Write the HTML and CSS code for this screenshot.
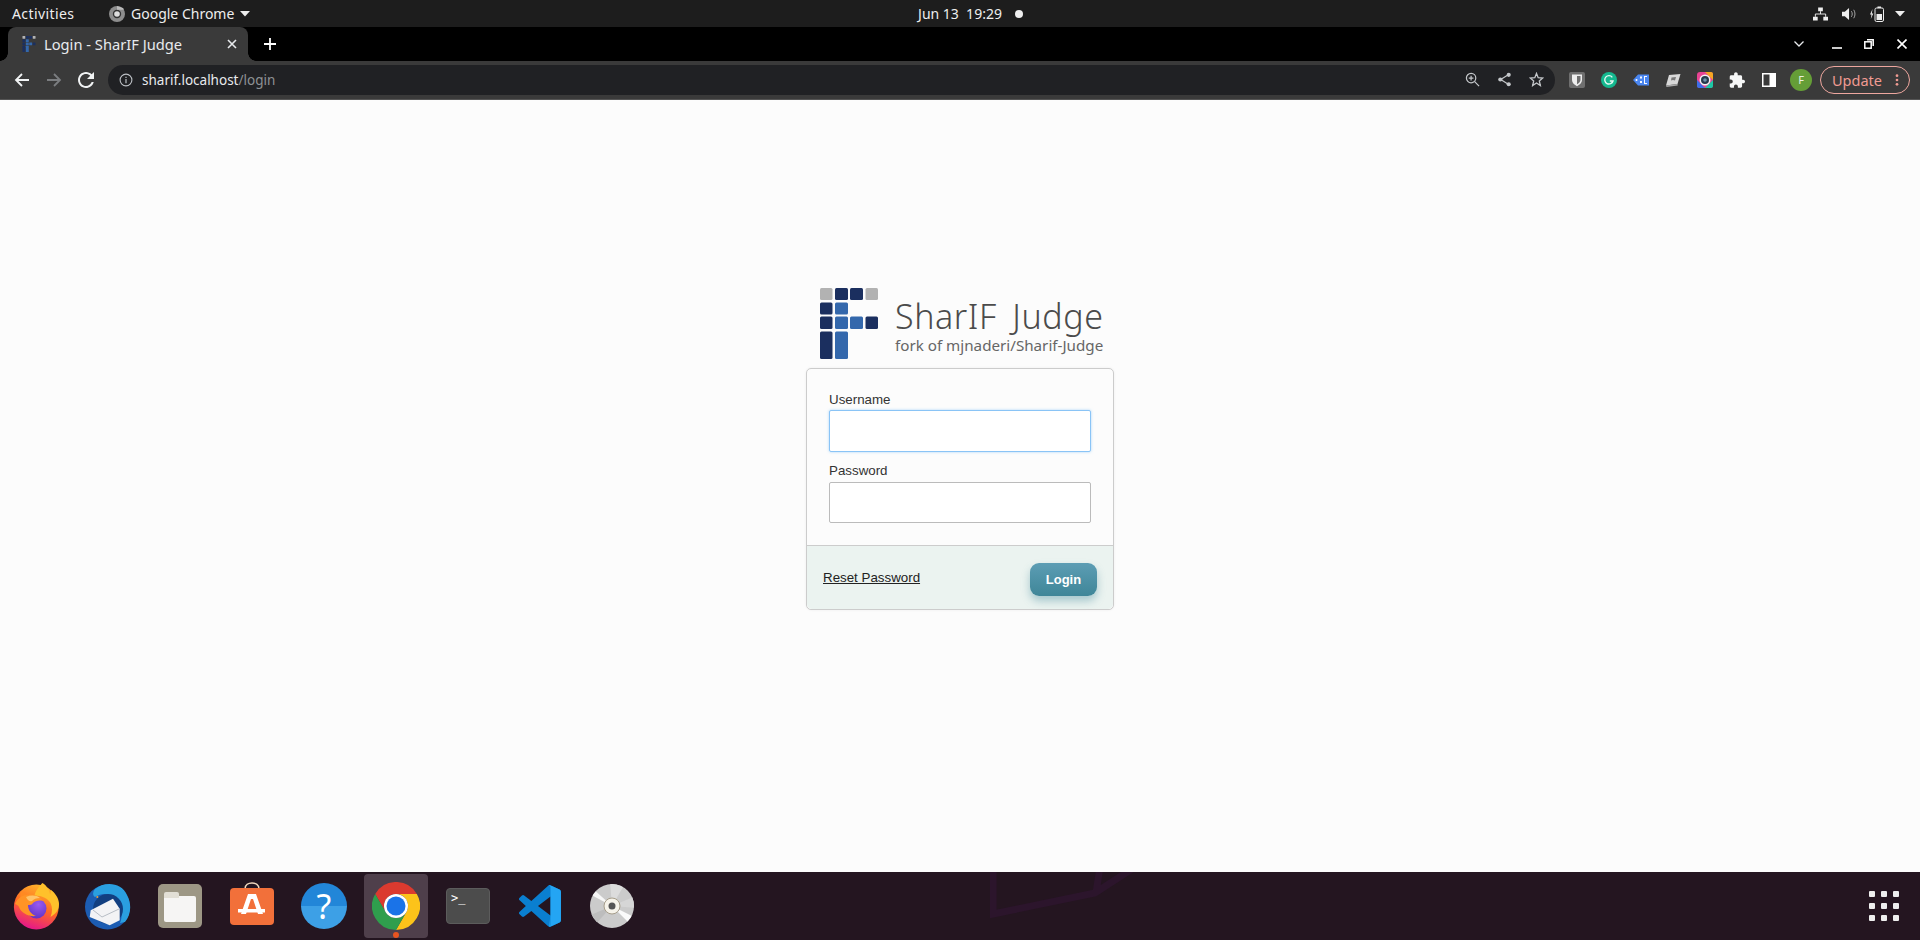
FILE: index.html
```html
<!DOCTYPE html>
<html lang="en">
<head>
<meta charset="utf-8">
<title>Login - SharIF Judge</title>
<link rel="stylesheet" href="styles.css">
</head>
<body>
<header class="topbar">
  <div class="top-left">
    <span class="activities">Activities</span>
    <span class="app-menu">
      <svg class="app-icon" viewBox="0 0 16 16"><circle cx="8" cy="8" r="8" fill="#8d8d8d"/><circle cx="8" cy="8" r="4.2" fill="#333"/><circle cx="8" cy="8" r="2.8" fill="#ddd"/><path d="M8 3.8h7L14 2 8 0z" fill="#bbb"/></svg>
      <span>Google Chrome</span>
      <svg class="caret" viewBox="0 0 10 6"><path d="M0 0h10L5 5.500z" fill="#eee"/></svg>
    </span>
  </div>
  <div class="clock"><span>Jun 13&nbsp;&nbsp;19:29</span><i class="clock-dot"></i></div>
  <div class="top-right">
    <svg class="tray-net" viewBox="0 0 16 14"><path d="M5.500 0h5v4h-5zM0 10h5v4H0zM11 10h5v4h-5z" fill="#eee"/><path d="M8 4v3M2.500 10V7h11v3" stroke="#eee" fill="none"/></svg>
    <svg class="tray-vol" viewBox="0 0 16 14"><path d="M0 4.500h3L7.500 0.500v13L3 9.500H0z" fill="#eee"/><path d="M10 4c1.200 1.800 1.200 4.200 0 6M12.500 2.500c1.800 2.700 1.800 6.300 0 9" stroke="#aaa" fill="none"/></svg>
    <svg class="tray-bat" viewBox="0 0 14 16"><path d="M2.500 3 0 8.500h1.500L.8 13 3.300 7.500H1.800z" fill="#eee"/><rect x="5" y="2" width="8.500" height="13.500" rx="1.500" fill="none" stroke="#eee"/><rect x="7.500" y="0.500" width="3.500" height="1.500" fill="#eee"/><rect x="6.500" y="8" width="5.500" height="6" fill="#eee"/></svg>
    <svg class="caret" viewBox="0 0 10 6"><path d="M0 0h10L5 5.500z" fill="#eee"/></svg>
  </div>
</header>

<div class="tabstrip">
  <div class="tab">
    <svg class="favicon" viewBox="0 0 58 71"><use href="#mark-art"/></svg>
    <span class="tab-title">Login - SharIF Judge</span>
    <svg class="tab-close" viewBox="0 0 10 10"><path d="M1 1l8 8M9 1l-8 8" stroke="#e8eaed" stroke-width="1.600"/></svg>
  </div>
  <svg class="new-tab" viewBox="0 0 12 12"><path d="M6 0v12M0 6h12" stroke="#fff" stroke-width="1.800"/></svg>
  <div class="win-controls">
    <svg class="win-list" viewBox="0 0 10 6"><path d="M.5.500 5 5 9.500.500" fill="none" stroke="#e8eaed" stroke-width="1.300"/></svg>
    <svg class="win-min" viewBox="0 0 10 10"><path d="M0 9h10" stroke="#fff" stroke-width="1.600"/></svg>
    <svg class="win-max" viewBox="0 0 10 10"><path d="M3 .800h6.200V7" fill="none" stroke="#fff" stroke-width="1.500"/><rect x=".8" y="2.800" width="6.400" height="6.400" fill="none" stroke="#fff" stroke-width="1.500"/></svg>
    <svg class="win-close" viewBox="0 0 10 10"><path d="M.5.500l9 9M9.500.500l-9 9" stroke="#fff" stroke-width="1.600"/></svg>
  </div>
</div>

<div class="toolbar">
  <svg class="nav" viewBox="0 0 16 16"><path d="M15 8H2M8 2 2 8l6 6" fill="none" stroke="#f1f3f4" stroke-width="1.800"/></svg>
  <svg class="nav" viewBox="0 0 16 16"><path d="M1 8h13M8 2l6 6-6 6" fill="none" stroke="#7b7d80" stroke-width="1.800"/></svg>
  <svg class="nav" viewBox="4 4 16 16"><path d="M17.650 6.350C16.200 4.900 14.210 4 12 4c-4.420 0-7.990 3.580-7.990 8s3.570 8 7.990 8c3.730 0 6.840-2.550 7.730-6h-2.080c-.82 2.330-3.040 4-5.650 4-3.310 0-6-2.690-6-6s2.690-6 6-6c1.660 0 3.140.69 4.220 1.780L13 11h7V4l-2.350 2.350z" fill="#f1f3f4"/></svg>
  <div class="omnibox">
    <svg class="info" viewBox="0 0 14 14"><circle cx="7" cy="7" r="5.900" fill="none" stroke="#bdc1c6" stroke-width="1.100"/><path d="M7 6v4.200M7 3.800v1.200" stroke="#bdc1c6" stroke-width="1.200"/></svg>
    <span class="url"><b>sharif.localhost</b><span>/login</span></span>
    <span class="omni-actions">
      <svg class="omni-icon" viewBox="0 0 16 16"><circle cx="6.500" cy="6.500" r="5" fill="none" stroke="#c4c7ca" stroke-width="1.300"/><path d="M10.300 10.300 15 15M4 6.500h5M6.500 4v5" stroke="#c4c7ca" stroke-width="1.300"/></svg>
      <svg class="omni-icon" viewBox="0 0 16 16"><path d="M12 3 4 8l8 5" fill="none" stroke="#c4c7ca" stroke-width="1.300"/><circle cx="12.500" cy="3" r="2.200" fill="#c4c7ca"/><circle cx="3.500" cy="8" r="2.200" fill="#c4c7ca"/><circle cx="12.500" cy="13" r="2.200" fill="#c4c7ca"/></svg>
      <svg class="omni-icon" viewBox="0 0 16 16"><path d="M8 1.500 9.800 6l4.900.4-3.700 3.200 1.100 4.800L8 11.800l-4.100 2.600L5 9.600 1.300 6.400 6.200 6z" fill="none" stroke="#c4c7ca" stroke-width="1.400"/></svg>
    </span>
  </div>
  <div class="extensions">
    <svg class="ext" viewBox="0 0 16 16"><rect width="16" height="16" rx="2" fill="#6f6f6f"/><path d="M3 2.500h10v5.500c0 3-2.500 4.800-5 6.200C5.500 12.800 3 11 3 8z" fill="#eee"/><path d="M8 4h3.500v4c0 2-1.800 3.300-3.500 4.300z" fill="#6f6f6f"/></svg>
    <svg class="ext" viewBox="0 0 16 16"><circle cx="8" cy="8" r="8" fill="#15b88f"/><path d="M11.300 5.300A4.200 4.200 0 1 0 12 9H8.800" fill="none" stroke="#e6f7f2" stroke-width="1.400"/></svg>
    <svg class="ext" viewBox="0 0 16 16"><path d="M5 2.500h11v11H5L0 8z" fill="#4a86f0"/><circle cx="3.500" cy="8" r="1" fill="#fff"/><path d="M7 4.500h2v2H7zM7 9h2v2H7zM11 4h1v8h-1zM12 4h2v1h-2zM12 11h2v1h-2z" fill="#fff" fill-opacity=".95"/></svg>
    <svg class="ext" viewBox="0 0 16 16"><path d="M4 3 15.500 2 12.500 12 1 13.500z" fill="#d8d8d8"/><path d="M1 13.500 12.500 12l.2 1.500L1.500 15z" fill="#aaa"/><path d="M6.500 5.500 11 5l-1 3.500-2-.5-2 .5z" fill="#777"/></svg>
    <svg class="ext" viewBox="0 0 16 16"><rect width="16" height="16" rx="3" fill="#e84393"/><path d="M8 0h6a2 2 0 0 1 2 2v6z" fill="#f5a623"/><path d="M16 8v6a2 2 0 0 1-2 2H8z" fill="#1cc8a5"/><path d="M0 8v6a2 2 0 0 0 2 2h6z" fill="#3d6ee8"/><circle cx="8" cy="8" r="5.500" fill="#f3f3f3"/><circle cx="8" cy="8" r="4" fill="#26394c"/><circle cx="8" cy="8" r="1.800" fill="#6f93ab"/></svg>
    <svg class="ext ext-puzzle" viewBox="1 1 22 21"><path d="M20.500 11H19V7c0-1.100-.9-2-2-2h-4V3.500C13 2.120 11.880 1 10.500 1S8 2.120 8 3.500V5H4c-1.100 0-1.990.9-1.990 2v3.800H3.500c1.490 0 2.700 1.210 2.700 2.700s-1.210 2.700-2.700 2.700H2V20c0 1.100.9 2 2 2h3.800v-1.500c0-1.490 1.210-2.700 2.700-2.700 1.490 0 2.700 1.210 2.700 2.700V22H17c1.100 0 2-.9 2-2v-4h1.500c1.380 0 2.500-1.120 2.500-2.500S21.880 11 20.500 11z" fill="#f6f7f7"/></svg>
    <svg class="ext ext-side" viewBox="0 0 14 14"><path fill-rule="evenodd" d="M0 0h14v14H0zM1.500 1.500v11h6v-11z" fill="#fff"/></svg>
    <span class="avatar">F</span>
    <span class="update"><span>Update</span><svg class="update-dots" viewBox="0 0 4 14"><circle cx="2" cy="2" r="1.600"/><circle cx="2" cy="7" r="1.600"/><circle cx="2" cy="12" r="1.600"/></svg></span>
  </div>
</div>

<main class="page">
  <div class="brand">
    <svg class="brand-mark" viewBox="0 0 58 71">
      <g id="mark-art">
        <g fill="#b2b2b2"><rect x="0" y="0" width="12.500" height="12" rx="1.500"/><rect x="45.500" y="0" width="12.500" height="12" rx="1.500"/></g>
        <g fill="#1b2f5f"><rect x="15" y="0" width="13" height="12" rx="1.500"/><rect x="30" y="0" width="13" height="12" rx="1.500"/><rect x="0" y="14.500" width="12.500" height="12" rx="1.500"/><rect x="0" y="28.500" width="12.500" height="12.500" rx="1.500"/><rect x="45.500" y="28.500" width="12.500" height="12.500" rx="1.500"/><rect x="0" y="43.500" width="12.500" height="27.500" rx="1.500"/></g>
        <g fill="#3468ac"><rect x="15" y="14.500" width="13" height="12" rx="1.500"/><rect x="15" y="28.500" width="13" height="12.500" rx="1.500"/><rect x="30" y="28.500" width="13" height="12.500" rx="1.500"/><rect x="15" y="43.500" width="13" height="27.500" rx="1.500"/></g>
      </g>
    </svg>
    <div class="brand-text">
      <span class="brand-title">SharIF Judge</span>
      <span class="brand-sub">fork of mjnaderi/Sharif-Judge</span>
    </div>
  </div>
  <form class="card">
    <div class="card-body">
      <label class="field-label" for="username">Username</label>
      <div class="input input-focus" id="username"></div>
      <label class="field-label field-second" for="password">Password</label>
      <div class="input input-second" id="password"></div>
    </div>
    <div class="card-foot">
      <a class="reset" href="#">Reset Password</a>
      <button class="login" type="button">Login</button>
    </div>
  </form>
</main>

<footer class="dock">
  <svg class="dock-art" viewBox="0 0 200 68"><path d="M3-5V42L105 21 145-5M110-5l-4 26" fill="none" stroke="#2c152c" stroke-width="7"/></svg>
  <div class="slot">
    <svg class="dock-icon" viewBox="0 0 48 48">
      <defs>
        <linearGradient id="ffbody" x1=".75" y1=".05" x2=".4" y2="1"><stop offset="0" stop-color="#ffb52a"/><stop offset=".5" stop-color="#ff6a24"/><stop offset="1" stop-color="#e5178a"/></linearGradient>
        <radialGradient id="ffcore" cx=".6" cy=".3" r=".8"><stop offset="0" stop-color="#9a5af0"/><stop offset="1" stop-color="#5a2fc0"/></radialGradient>
      </defs>
      <circle cx="24.300" cy="25" r="22.400" fill="url(#ffbody)"/>
      <path d="M30.300 1C27 5 23 9 22.500 14c6-1 13 2 16 7 2 4 2 9 0 14 5-3 8.500-7 8.500-13 0-6-4-11-8-14 0 2 0 3-1 4-1-5-4-9-7.700-11z" fill="#ffc12b"/>
      <path d="M9.300 9C8 13 8 15 9 18l6-6z" fill="#ff8a22"/>
      <circle cx="24.500" cy="26.500" r="10" fill="url(#ffcore)"/>
      <path d="M3 22C6 14 16 10 25 14c3 1 5 3 6 5-4-1-8 0-10 2 -1 2-3 2-5 2 0 5 3 9 8 11-7 1-15-3-17-9-1-2-2-2-4-3z" fill="#ff9425"/>
      <path d="M14 15c5-2 10-2 14 1-4 0-6 1-8 3-2 1-4 0-6-4z" fill="#ffc46a"/>
    </svg>
  </div>
  <div class="slot">
    <svg class="dock-icon" viewBox="0 0 48 48">
      <circle cx="23.500" cy="25" r="22.500" fill="#1c5cb2"/>
      <path d="M11 7C20-1 38 0 43 13c5 9 4 20-2 27l-5 1c4-10 1-24-10-28-5-2-10-1-15 2-2-1-3-4 0-8z" fill="#2a9fe0"/>
      <circle cx="24" cy="27" r="15" fill="#123f80"/>
      <path d="M6.700 28.300 29 16.700l6.700 10v11.600l-10 5L5.700 35z" fill="#f3f3f5"/>
      <path d="M9 28l9 7 17-8" fill="none" stroke="#b8bec6" stroke-width="1"/>
      <circle cx="13.300" cy="15" r="1" fill="#e9a13b"/>
    </svg>
  </div>
  <div class="slot">
    <div class="files"><span class="folder"></span></div>
  </div>
  <div class="slot">
    <svg class="dock-icon" viewBox="0 0 48 48">
      <path d="M17 7c0-8 14-8 14 0" fill="none" stroke="#f0d7bd" stroke-width="1.600"/>
      <rect x="2" y="6" width="44" height="37" rx="4" fill="#f2703a"/>
      <path d="M20 12h8l7 20h-5l-5-15h-2l-5 15h-5z" fill="#fff"/>
      <path d="M10 27h27v3.500H10z" fill="#fff"/>
    </svg>
  </div>
  <div class="slot">
    <span class="help">?</span>
  </div>
  <div class="slot slot-active">
    <svg class="dock-icon" viewBox="0 0 48 48"><path d="M3.200 12A24 24 0 0 1 44.800 12H24A12 12 0 0 0 13.600 30z" fill="#db3a2f"/><path d="M44.800 12A24 24 0 0 1 24 48L34.400 30A12 12 0 0 0 24 12z" fill="#fcc31a"/><path d="M24 48A24 24 0 0 1 3.200 12L13.600 30A12 12 0 0 0 34.400 30z" fill="#2f9e4d"/><circle cx="24" cy="24" r="12" fill="#fff"/><circle cx="24" cy="24" r="9.500" fill="#1a73e8"/></svg>
    <i class="running"></i>
  </div>
  <div class="slot">
    <div class="terminal">&gt;_</div>
  </div>
  <div class="slot">
    <svg class="vscode" viewBox="0 0 100 100">
      <path fill-rule="evenodd" d="M96.400 10.800 75.800.9a6.200 6.200 0 0 0-7.100 1.200L29.400 38 12.300 25a4.200 4.200 0 0 0-5.300.2L1.500 30.300a4.200 4.200 0 0 0 0 6.200L16.300 50 1.500 63.500a4.200 4.200 0 0 0 0 6.200L7 74.800a4.200 4.200 0 0 0 5.300.2l17.100-13 39.300 35.900a6.200 6.200 0 0 0 7.100 1.200l20.600-9.900a6.200 6.200 0 0 0 3.500-5.600V16.400a6.200 6.200 0 0 0-3.500-5.600zM75 72.700 45.200 50 75 27.300z" fill="#0a7fd0"/>
      <path d="M71 .5 75.800.9l20.600 9.900a6.200 6.200 0 0 1 3.500 5.600v67.200a6.200 6.200 0 0 1-3.500 5.600L75.800 99.100 71 99.500 75 96V4z" fill="#24a5f3"/>
      <path d="M75 4v92l-4 3.500L75 72.700V27.300z" fill="#1f9be8"/>
    </svg>
  </div>
  <div class="slot">
    <svg class="dock-icon" viewBox="0 0 48 48">
      <defs><clipPath id="disc"><circle cx="24" cy="24" r="22"/></clipPath></defs>
      <circle cx="24" cy="24" r="22" fill="#cbcbcb"/>
      <g clip-path="url(#disc)">
        <path d="M24 24 22 0h16z" fill="#dcdcdc"/>
        <path d="M24 24 48 14v12z" fill="#d6d6d6"/>
        <path d="M24 24 0 34l6 10z" fill="#bdbdbd"/>
        <path d="M24 24-2 10l5-5z" fill="#f7f7f7"/>
        <path d="M24 24 50 37l-6 7z" fill="#fafafa"/>
      </g>
      <circle cx="24" cy="24" r="8" fill="#f6f3ea" stroke="#a69d8a"/>
      <circle cx="24" cy="24" r="3.500" fill="#555"/>
    </svg>
  </div>
  <div class="apps-grid">
    <i></i><i></i><i></i><i></i><i></i><i></i><i></i><i></i><i></i>
  </div>
</footer>
</body>
</html>
```

FILE: styles.css
```css
* { box-sizing: border-box; }
html, body { margin: 0; height: 100%; }
body {
  display: flex;
  flex-direction: column;
  height: 940px;
  overflow: hidden;
  font-family: "Liberation Sans", Arial, sans-serif;
  background: #fcfcfc;
}

/* GNOME top bar */
.topbar {
  height: 27px;
  flex: none;
  display: grid;
  grid-template-columns: 1fr auto 1fr;
  align-items: center;
  background: #1d1d1d;
  color: #eee;
  font: 14px "Noto Sans", sans-serif;
  padding: 0 12px;
}
.top-left { display: flex; align-items: center; }
.activities { width: 97px; letter-spacing: .4px; }
.app-menu { display: flex; align-items: center; gap: 6px; }
.app-icon { width: 16px; height: 16px; }
.caret { width: 10px; height: 6px; }
.clock { display: flex; align-items: center; padding-left: 21px; }
.clock-dot { width: 8px; height: 8px; border-radius: 50%; background: #eee; margin-left: 13px; }
.top-right { display: flex; align-items: center; justify-content: flex-end; padding-right: 3px; }
.tray-net { width: 15px; height: 14px; margin-right: 14px; }
.tray-vol { width: 15px; height: 14px; margin-right: 13px; }
.tray-bat { width: 14px; height: 16px; margin-right: 11px; }

/* Tab strip */
.tabstrip {
  height: 34px;
  flex: none;
  display: flex;
  align-items: center;
  background: #000;
  padding-left: 8px;
}
.tab {
  position: relative;
  width: 240px;
  height: 34px;
  display: flex;
  align-items: center;
  background: #3a3a3a;
  border-radius: 8px 8px 0 0;
  padding: 0 11px 0 14px;
  color: #e8eaed;
  font: 14.700px "Noto Sans", sans-serif;
}
.tab::before, .tab::after {
  content: "";
  position: absolute;
  bottom: 0;
  width: 8px;
  height: 8px;
}
.tab::before { left: -8px; background: radial-gradient(circle at 0 0, transparent 7.500px, #3a3a3a 8px); }
.tab::after { right: -8px; background: radial-gradient(circle at 100% 0, transparent 7.500px, #3a3a3a 8px); }
.favicon { width: 14px; height: 16px; margin-right: 8px; }
.tab-title { flex: 1; }
.tab-close { width: 10px; height: 10px; }
.new-tab { width: 12px; height: 12px; margin-left: 16px; }
.win-controls { margin-left: auto; display: flex; align-items: center; padding-right: 13px; }
.win-list { width: 10px; height: 6px; margin-right: 28px; }
.win-min { width: 10px; height: 10px; margin-right: 22px; }
.win-max { width: 10px; height: 10px; margin-right: 23px; }
.win-close { width: 10px; height: 10px; }

/* Toolbar */
.toolbar {
  height: 39px;
  flex: none;
  display: flex;
  align-items: center;
  background: #3a3a3a;
  border-bottom: 1px solid #555;
  padding: 0 10px 1px 14px;
}
.nav { width: 16px; height: 16px; margin-right: 16px; }
.omnibox {
  width: 1447px;
  height: 30px;
  margin-left: -2px;
  display: flex;
  align-items: center;
  background: #202124;
  border-radius: 15px;
  padding: 0 11px 0 11px;
  font: 13.500px "Noto Sans", sans-serif;
}
.info { width: 14px; height: 14px; margin-right: 9px; }
.url { color: #8e9194; }
.url b { font-weight: 400; color: #e8eaed; }
.omni-actions { margin-left: auto; display: flex; align-items: center; gap: 17px; }
.omni-icon { width: 15px; height: 15px; }
.extensions { flex: 1; display: flex; align-items: center; justify-content: flex-end; }
.ext { width: 16px; height: 16px; margin-right: 16px; }
.ext-puzzle { margin-right: 17px; }
.ext-side { width: 14px; height: 14px; margin-right: 14px; }
.avatar {
  width: 22px;
  height: 22px;
  margin-right: 8px;
  border-radius: 50%;
  background: #659e37;
  color: #e9f0e0;
  font: 11px/22px "Noto Sans", sans-serif;
  text-align: center;
}
.update {
  width: 90px;
  height: 28px;
  display: flex;
  align-items: center;
  justify-content: space-between;
  border: 1px solid #eea79f;
  border-radius: 14px;
  padding: 0 10px 0 11px;
  color: #f09b92;
  font: 14.500px "Noto Sans", sans-serif;
}
.update-dots { width: 4px; height: 12px; fill: #f09b92; }

/* Page */
.page {
  flex: 1;
  display: flex;
  flex-direction: column;
  align-items: center;
  padding-top: 188px;
  background: #fcfcfc;
}
.brand {
  width: 308px;
  height: 80px;
  display: flex;
  align-items: flex-start;
  padding-left: 14px;
  gap: 17px;
}
.brand-mark { width: 58px; height: 71px; flex: none; }
.brand-text { display: flex; flex-direction: column; color: #4b4b4b; }
.brand-title {
  font: 300 34px/40px "Noto Sans", sans-serif;
  letter-spacing: .6px;
  word-spacing: 6px;
  margin-top: 8px;
  white-space: nowrap;
}
.brand-sub {
  font: 400 15.200px/18px "Noto Sans", sans-serif;
  color: #666;
  white-space: nowrap;
}
.card {
  width: 308px;
  border: 1px solid #ccc;
  border-radius: 5px;
  background: #fcfcfc;
  box-shadow: 0 0 3px rgba(0,0,0,.06);
}
.card-body { padding: 23px 22px 22px; }
.field-label {
  display: block;
  font-size: 13.330px;
  line-height: 15px;
  color: #333;
  margin-bottom: 3px;
}
.field-second { margin-top: 11px; margin-bottom: 4px; }
.input {
  width: 262px;
  height: 42px;
  background: #fff;
  border: 1px solid #bbb;
  border-radius: 2px;
}
.input-second { height: 41px; }
.input-focus { border-color: #8ac4f6; box-shadow: 0 0 3px rgba(120,190,250,.6); }
.card-foot {
  height: 64px;
  display: flex;
  justify-content: space-between;
  align-items: flex-start;
  padding: 17px 16px 0;
  background: #ebf3f0;
  border-top: 1px solid #ccc;
  border-radius: 0 0 5px 5px;
}
.reset {
  margin-top: 7px;
  font-size: 13.330px;
  color: #222;
}
.login {
  width: 67px;
  height: 33px;
  border: 0;
  border-radius: 9px;
  background: linear-gradient(#5c9db4, #3f8698);
  box-shadow: 0 5px 8px rgba(63,134,152,.4);
  color: #fff;
  font: bold 13px "Liberation Sans", sans-serif;
}

/* Dock */
.dock {
  position: relative;
  height: 68px;
  flex: none;
  display: flex;
  align-items: center;
  background: #241520;
}
.dock-art { position: absolute; left: 990px; top: 0; width: 200px; height: 68px; }
.slot {
  position: relative;
  width: 64px;
  height: 64px;
  margin: 0 4px;
  display: flex;
  align-items: center;
  justify-content: center;
  border-radius: 4px;
}
.slot-active { background: #4f3f4b; }
.dock-icon { width: 48px; height: 48px; }
.vscode { width: 42px; height: 42px; }
.running {
  position: absolute;
  left: 29px;
  bottom: 0;
  width: 6px;
  height: 6px;
  border-radius: 50%;
  background: #e95420;
}
.files {
  width: 44px;
  height: 44px;
  border-radius: 5px;
  background: #9d9785;
  display: flex;
  align-items: center;
  justify-content: center;
}
.folder {
  position: relative;
  width: 32px;
  height: 26px;
  margin-top: 6px;
  background: #f6f5f4;
  border-radius: 2px;
}
.folder::before {
  content: "";
  position: absolute;
  left: 0;
  top: -4px;
  width: 15px;
  height: 6px;
  border-radius: 2px 2px 0 0;
  background: #e2dfd6;
}
.help {
  width: 46px;
  height: 46px;
  border-radius: 50%;
  background: linear-gradient(#2286d8 50%, #3da0e6 50%);
  color: #fff;
  font: 34px/46px "Noto Sans", sans-serif;
  text-align: center;
}
.terminal {
  width: 44px;
  height: 36px;
  border-radius: 4px;
  background: #4c4c4c;
  border: 1px solid #5c5c5c;
  color: #fff;
  font: 12px/14px "DejaVu Sans Mono", monospace;
  padding: 2px 4px;
}
.apps-grid {
  position: absolute;
  right: 21px;
  top: 19px;
  display: grid;
  grid-template-columns: repeat(3, 6px);
  gap: 6px;
}
.apps-grid i { width: 6px; height: 6px; border-radius: 1px; background: #eeeeee; }
```
